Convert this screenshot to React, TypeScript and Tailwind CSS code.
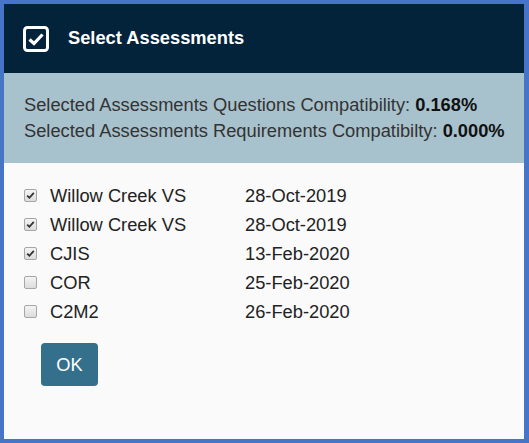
import React from "react";

const rows = [
  { name: "Willow Creek VS", date: "28-Oct-2019", checked: true },
  { name: "Willow Creek VS", date: "28-Oct-2019", checked: true },
  { name: "CJIS", date: "13-Feb-2020", checked: true },
  { name: "COR", date: "25-Feb-2020", checked: false },
  { name: "C2M2", date: "26-Feb-2020", checked: false },
];

function Box({ checked }: { checked: boolean }) {
  return (
    <span className="flex h-[13px] w-[13px] items-center justify-center rounded-[2px] border border-[#a6a6a6] bg-gradient-to-b from-[#f4f4f4] to-[#dcdcdc]">
      {checked && (
        <svg width="9" height="9" viewBox="0 0 9 9">
          <path d="M1.2 4.6 L3.4 6.8 L7.8 1.8" fill="none" stroke="#333" strokeWidth="1.8" />
        </svg>
      )}
    </span>
  );
}

export default function App() {
  return (
    <div
      className="flex h-[443px] w-[529px] flex-col border-[4px] border-r-[5px] border-[#4675c8] bg-[#fafafa] text-[18.3px] text-[#333]"
      style={{ fontFamily: '"Liberation Sans", Arial, sans-serif' }}
    >
      <div className="flex h-[69px] items-center gap-[19px] bg-[#03233a] pl-[19px]">
        <svg width="26" height="26" viewBox="0 0 26 26">
          <rect x="1.5" y="1.5" width="23" height="23" rx="3" fill="none" stroke="#fff" strokeWidth="3" />
          <path d="M6.5 13.5 L11 17.5 L19.5 8.5" fill="none" stroke="#fff" strokeWidth="3.2" />
        </svg>
        <span className="font-bold leading-none text-white">Select Assessments</span>
      </div>
      <div className="whitespace-nowrap bg-[#a8c2cd] py-[19px] pl-[20px] leading-[26px]">
        <div>
          Selected Assessments Questions Compatibility: <b className="text-[#111]">0.168%</b>
        </div>
        <div>
          Selected Assessments Requirements Compatibilty: <b className="text-[#111]">0.000%</b>
        </div>
      </div>
      <div className="flex flex-col px-[20px] pt-[18px]">
        {rows.map((r, i) => (
          <div key={i} className="flex h-[29px] items-center text-[#222]">
            <span className="w-[26px]">
              <Box checked={r.checked} />
            </span>
            <span className="w-[195px]">{r.name}</span>
            <span>{r.date}</span>
          </div>
        ))}
        <div className="pl-[17px] pt-[17px]">
          <button className="flex h-[43px] w-[57px] items-center justify-center rounded-[4px] bg-[#346f8c] text-white">
            OK
          </button>
        </div>
      </div>
    </div>
  );
}
